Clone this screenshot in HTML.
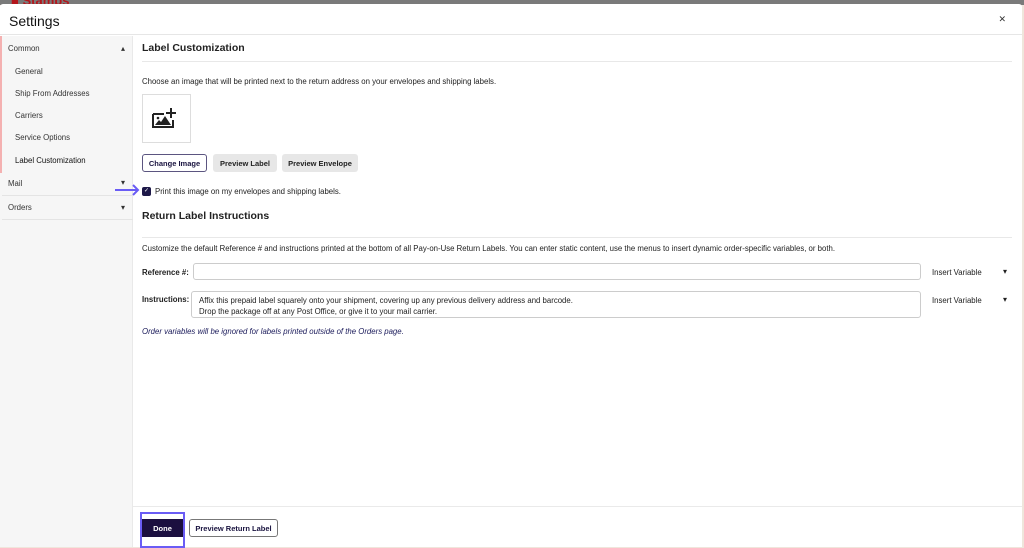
<!DOCTYPE html>
<html><head><style>
*{box-sizing:border-box;margin:0;padding:0}
body{width:1024px;height:547px;overflow:hidden;font-family:"Liberation Sans",sans-serif;background:#efe6dc;position:relative;color:#222}
.top{position:absolute;left:0;top:0;width:1024px;height:5px;background:#7a7a7a}
.top span{position:absolute;left:11px;top:-7px;color:#b3151b;font-weight:bold;font-size:13px}
.modal{position:absolute;left:0;top:4px;width:1022px;height:543px;background:#fff;border-radius:3px 3px 0 0}
.hdr{height:31px;border-bottom:1px solid #e6e6e6;position:relative}
.hdr h1{font-size:14px;font-weight:normal;position:absolute;left:9px;top:9px;color:#111}
.x{position:absolute;right:16px;top:10px;font-size:9px;color:#333}
.side{position:absolute;left:0;top:32px;width:133px;height:511px;background:#f6f6f6;border-right:1px solid #e9e9e9}
.side .bar{position:absolute;left:0;top:0;width:2px;height:137px;background:#f4b1b1}
.side div.i{position:absolute;font-size:7.8px;color:#333}
.sep{position:absolute;left:2px;width:131px;height:1px;background:#e4e4e4}
.main{position:absolute;left:142px;top:29px;width:870px}
h2{font-size:10.5px;font-weight:bold;color:#222;position:absolute;left:0}
.hl{position:absolute;left:0;width:870px;height:1px;background:#e8e8e8}
.t{position:absolute;left:0;font-size:7.8px;color:#222;white-space:nowrap}
.btn{position:absolute;height:18px;font-size:7.5px;font-weight:bold;border-radius:3px;display:flex;align-items:center;justify-content:center;color:#222;background:#e7e7e7}
.in{position:absolute;border:1px solid #ccc;border-radius:3px;background:#fff}
.foot{position:absolute;left:133px;top:502px;width:889px;height:41px;border-top:1px solid #eaeaea}
</style></head><body>
<div class="top"><span>■ Stamps</span></div>
<div class="modal">
<div class="hdr"><h1>Settings</h1><div class="x">✕</div></div>
<div class="side"><div class="bar"></div>
<div class="i" style="left:8px;top:8px">Common</div><div class="i" style="left:121px;top:8px">▴</div>
<div class="i" style="left:15px;top:31px">General</div>
<div class="i" style="left:15px;top:53px">Ship From Addresses</div>
<div class="i" style="left:15px;top:75px">Carriers</div>
<div class="i" style="left:15px;top:97px">Service Options</div>
<div class="i" style="left:15px;top:120px;color:#111">Label Customization</div>
<div class="i" style="left:8px;top:143px">Mail</div><div class="i" style="left:121px;top:142px">▾</div>
<div class="sep" style="top:159px"></div>
<div class="i" style="left:8px;top:167px">Orders</div><div class="i" style="left:121px;top:167px">▾</div>
<div class="sep" style="top:183px"></div>
</div>
<div class="main">
<h2 style="top:9px">Label Customization</h2>
<div class="hl" style="top:28px"></div>
<div class="t" style="top:44px">Choose an image that will be printed next to the return address on your envelopes and shipping labels.</div>
<div style="position:absolute;left:0;top:61px;width:49px;height:49px;border:1px solid #ddd">
<svg width="49" height="49" viewBox="0 0 49 49" style="position:absolute;left:-1px;top:-1px"><path d="M11 20h11M11 20v13h20v-7" fill="none" stroke="#222" stroke-width="2"/><path d="M13 31l4-5 2 2 4-6 6 9z" fill="#222"/><circle cx="16" cy="24" r="1.3" fill="#222"/><path d="M29 14v10M24 19h10" stroke="#222" stroke-width="2"/></svg></div>
<div class="btn" style="left:0;top:121px;width:65px;background:#fff;border:1px solid #5b5580;color:#1a1440">Change Image</div>
<div class="btn" style="left:71px;top:121px;width:64px">Preview Label</div>
<div class="btn" style="left:140px;top:121px;width:76px">Preview Envelope</div>
<div style="position:absolute;left:0;top:154px;width:9px;height:9px;background:#1d1848;border-radius:2px;color:#fff;font-size:6px;text-align:center;line-height:9px">✓</div>
<div class="t" style="left:13px;top:154px">Print this image on my envelopes and shipping labels.</div>
<h2 style="top:177px">Return Label Instructions</h2>
<div class="hl" style="top:204px"></div>
<div class="t" style="top:211px">Customize the default Reference # and instructions printed at the bottom of all Pay-on-Use Return Labels. You can enter static content, use the menus to insert dynamic order-specific variables, or both.</div>
<div class="t" style="top:235px;font-weight:bold">Reference #:</div>
<div class="in" style="left:51px;top:230px;width:728px;height:17px"></div>
<div class="t" style="left:790px;top:235px">Insert Variable</div><div class="t" style="left:861px;top:234px">▾</div>
<div class="t" style="top:262px;font-weight:bold">Instructions:</div>
<div class="in" style="left:49px;top:258px;width:730px;height:27px"></div>
<div class="t" style="left:57px;top:262px;line-height:11px">Affix this prepaid label squarely onto your shipment, covering up any previous delivery address and barcode.<br>Drop the package off at any Post Office, or give it to your mail carrier.</div>
<div class="t" style="left:790px;top:263px">Insert Variable</div><div class="t" style="left:861px;top:262px">▾</div>
<div class="t" style="top:294px;font-style:italic;color:#1a1a5a">Order variables will be ignored for labels printed outside of the Orders page.</div>
</div>
<div class="foot">
<div style="position:absolute;left:7px;top:5px;width:45px;height:36px;border:2px solid #6a5cf5"></div>
<div class="btn" style="left:9px;top:12px;width:41px;background:#1b0f3f;color:#fff;border-radius:0">Done</div>
<div class="btn" style="left:56px;top:12px;width:89px;background:#fff;border:1px solid #777;color:#1a1440">Preview Return Label</div>
</div>
</div>
<svg style="position:absolute;left:114px;top:184px" width="28" height="12"><path d="M1 6h23M19 1l5 5-5 5" fill="none" stroke="#6a5cf5" stroke-width="2"/></svg>
</body></html>
